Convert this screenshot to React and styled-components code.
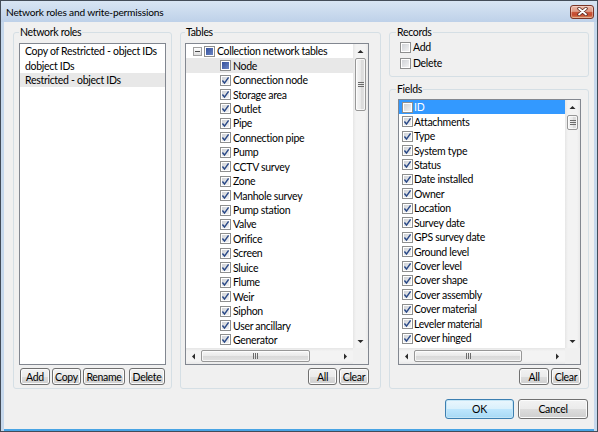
import React from "react";
import styled, { createGlobalStyle } from "styled-components";

const FONT = `"Lato", "Liberation Sans", sans-serif`;

const Global = createGlobalStyle`
  html, body { margin: 0; padding: 0; background: #ffffff; }
  body { font-family: ${FONT}; font-size: 10.5px; letter-spacing: -0.3px; color: #000; }
  *, *::before, *::after { box-sizing: border-box; }
`;

const Window = styled.div`
  width: 598px;
  height: 432px;
  border: 1px solid #434c58;
  background: #c6d8ec;
  display: flex;
  flex-direction: column;
  overflow: hidden;
`;

const TitleBar = styled.div`
  height: 21px;
  flex: none;
  display: flex;
  align-items: center;
  justify-content: space-between;
  padding: 0 3px 0 5px;
  background: linear-gradient(#d8e5f3, #bed1e9);
`;

const Title = styled.span`
  font-size: 10.2px;
  letter-spacing: -0.2px;
  color: #000;
`;

const CloseButton = styled.div`
  width: 24px;
  height: 14px;
  border-radius: 3px;
  border: 1px solid #7a3527;
  background: linear-gradient(#ecb6a5 0%, #de9c88 45%, #c9583c 52%, #c44a2f 75%, #dc905f 100%);
  box-shadow: inset 0 0 0 1px rgba(255, 255, 255, 0.35);
  display: flex;
  align-items: center;
  justify-content: center;
`;

const Body = styled.div`
  flex: 1;
  min-height: 0;
  margin: 0 3px;
  background: #f0f0f0;
  border-bottom: 2px solid #48a4e4;
  display: flex;
  flex-direction: column;
  padding: 4px 5px 10px 9px;
`;

const Columns = styled.div`
  height: 363px;
  flex: none;
  display: flex;
  gap: 8px;
`;

const Column = styled.div`
  width: ${(p) => p.$w}px;
  min-height: 0;
  display: flex;
  flex-direction: column;
  gap: 6px;
`;

const Group = styled.fieldset`
  margin: 0;
  min-width: 0;
  min-height: 0;
  border: 1px solid #d5dfe5;
  border-radius: 3px;
  padding: 0 ${(p) => p.$pr}px ${(p) => p.$pb}px ${(p) => p.$pl}px;
  display: flex;
  flex-direction: column;
  width: ${(p) => (p.$w ? `${p.$w}px` : "auto")};
  flex: ${(p) => (p.$grow ? "1 1 0" : "none")};
  overflow: hidden;
`;

const Legend = styled.legend`
  padding: 0 1px;
  line-height: 13px;
  font-size: 10.5px;
`;

const ListBox = styled.div`
  flex: 1 1 0;
  min-height: 0;
  margin-top: 4px;
  border: 1px solid #828790;
  background: #fff;
  overflow: hidden;
`;

const RoleRow = styled.div`
  height: 14.45px;
  display: flex;
  align-items: center;
  padding-left: 5px;
  white-space: nowrap;
  background: ${(p) => (p.$selected ? "#e8e8e8" : "transparent")};
`;

const ScrollBox = styled.div`
  flex: 1 1 0;
  min-height: 0;
  margin-top: ${(p) => p.$mt}px;
  margin-left: ${(p) => p.$ml || 0}px;
  border: 1px solid #828790;
  background: #fff;
  display: grid;
  grid-template-columns: minmax(0, 1fr) 15px;
  grid-template-rows: minmax(0, 1fr) 16px;
  overflow: hidden;
`;

const Content = styled.div`
  overflow: hidden;
  min-height: 0;
  min-width: 0;
`;

const VScroll = styled.div`
  display: flex;
  flex-direction: column;
  min-height: 0;
  background: linear-gradient(90deg, #e6e6e6, #f3f3f3 20%, #f3f3f3 80%, #e9e9e9);
`;

const HScroll = styled.div`
  display: flex;
  min-width: 0;
  background: linear-gradient(#e6e6e6, #f3f3f3 20%, #f3f3f3 80%, #e9e9e9);
`;

const Corner = styled.div`
  background: #f0f0f0;
`;

const ArrowButton = styled.div`
  flex: none;
  width: ${(p) => (p.$h ? "15px" : "auto")};
  height: ${(p) => (p.$h ? "auto" : "14px")};
  display: flex;
  align-items: center;
  justify-content: center;
`;

const Track = styled.div`
  flex: 1;
  display: flex;
  flex-direction: ${(p) => (p.$h ? "row" : "column")};
  min-width: 0;
  min-height: 0;
`;

const VThumb = styled.div`
  flex: none;
  margin: ${(p) => p.$offset}px 2px 0 2px;
  height: ${(p) => p.$size}px;
  border: 1px solid #979797;
  border-radius: 2px;
  background: linear-gradient(90deg, #f6f6f6, #e9e9e9 50%, #d9d9d9 51%, #e2e2e2);
  box-shadow: inset 0 0 0 1px rgba(255, 255, 255, 0.7);
  display: flex;
  align-items: center;
  justify-content: center;
`;

const HThumb = styled.div`
  flex: none;
  margin: 2px 0 2px ${(p) => p.$offset}px;
  width: ${(p) => p.$size}px;
  border: 1px solid #979797;
  border-radius: 2px;
  background: linear-gradient(#f6f6f6, #e9e9e9 50%, #d9d9d9 51%, #e2e2e2);
  box-shadow: inset 0 0 0 1px rgba(255, 255, 255, 0.7);
  display: flex;
  align-items: center;
  justify-content: center;
`;

const TreeRow = styled.div`
  height: 14.45px;
  display: flex;
  align-items: center;
  white-space: nowrap;
  padding-left: ${(p) => p.$indent}px;
  background: ${(p) => (p.$selected ? "#e8e8e8" : "transparent")};
`;

const ItemRow = styled.div`
  height: 14.45px;
  display: flex;
  align-items: center;
  white-space: nowrap;
  padding-left: 3px;
  background: ${(p) => (p.$selected ? "#3399ff" : "transparent")};
  color: ${(p) => (p.$selected ? "#fff" : "#000")};
`;

const Label = styled.span`
  margin-left: ${(p) => p.$gap ?? 2}px;
`;

const Expander = styled.span`
  flex: none;
  width: 9px;
  height: 9px;
  margin-right: 2px;
  border: 1px solid #a0a0a0;
  background: linear-gradient(#ffffff, #dedede);
  display: flex;
  align-items: center;
  justify-content: center;
  &::after {
    content: "";
    width: 5px;
    height: 1px;
    background: #4a4a4a;
  }
`;

const Box = styled.span`
  flex: none;
  width: 11px;
  height: 11px;
  border: 1px solid #8e8f8f;
  background: linear-gradient(135deg, #cbced3, #f6f6f6);
  box-shadow: inset 0 0 0 1px #ffffff;
  display: flex;
  align-items: center;
  justify-content: center;
`;

const Mixed = styled.span`
  width: 7px;
  height: 7px;
  background: linear-gradient(135deg, #34509b, #6b85c4);
`;

const CheckRow = styled.div`
  height: 16px;
  display: flex;
  align-items: center;
  padding-left: 4px;
`;

const ButtonRow = styled.div`
  flex: none;
  display: flex;
  gap: 2px;
  margin-top: 3px;
  padding-left: ${(p) => p.$pl || 0}px;
  justify-content: ${(p) => (p.$end ? "flex-end" : "flex-start")};
`;

const Button = styled.button`
  font: inherit;
  font-size: 10.5px;
  letter-spacing: -0.3px;
  color: #000;
  padding: 0;
  width: ${(p) => p.$w}px;
  height: ${(p) => p.$h || 17}px;
  margin-left: ${(p) => p.$ml || 0}px;
  border-radius: 3px;
  border: 1px solid ${(p) => (p.$primary ? "#3c7fb1" : "#707070")};
  background: ${(p) =>
    p.$primary
      ? "linear-gradient(#eaf6fd 0%, #d9f0fc 50%, #bee6fd 51%, #a7d9f5 100%)"
      : "linear-gradient(#f2f2f2 0%, #ebebeb 50%, #dddddd 51%, #cfcfcf 100%)"};
  box-shadow: inset 0 0 0 1px ${(p) => (p.$primary ? "#c4e5f6" : "#fcfcfc")};
  display: flex;
  align-items: center;
  justify-content: center;
`;

const Footer = styled.div`
  display: flex;
  justify-content: flex-end;
  gap: 4px;
  margin-top: 10px;
  padding-right: 1px;
`;

function Check({ state }) {
  return (
    <Box>
      {state === "checked" && (
        <svg width="9" height="9" viewBox="0 0 9 9">
          <path d="M1.4 4.6 L3.5 7.1 L7.6 1.4" fill="none" stroke="#2b4a88" strokeWidth="1.5" />
        </svg>
      )}
      {state === "mixed" && <Mixed />}
    </Box>
  );
}

function Arrow({ dir }) {
  const pts = {
    up: "0,4 3,1 6,4",
    down: "0,1 3,4 6,1",
    left: "4,0 1,3 4,6",
    right: "1,0 4,3 1,6",
  }[dir];
  const vertical = dir === "up" || dir === "down";
  return (
    <svg width={vertical ? 7 : 5} height={vertical ? 5 : 7} viewBox={vertical ? "0 0 6 5" : "0 0 5 6"}>
      <polygon points={pts} fill="#2a2a2a" />
    </svg>
  );
}

function GripV() {
  return (
    <svg width="6" height="5" viewBox="0 0 6 5">
      <path d="M0 0.5H6M0 2.5H6M0 4.5H6" stroke="#6b6b6b" strokeWidth="1" />
    </svg>
  );
}

function GripH() {
  return (
    <svg width="5" height="6" viewBox="0 0 5 6">
      <path d="M0.5 0V6M2.5 0V6M4.5 0V6" stroke="#6b6b6b" strokeWidth="1" />
    </svg>
  );
}

function Scroller({ children, mt, ml, vOffset, vSize, hSize }) {
  return (
    <ScrollBox $mt={mt} $ml={ml}>
      <Content>{children}</Content>
      <VScroll>
        <ArrowButton>
          <Arrow dir="up" />
        </ArrowButton>
        <Track>
          <VThumb $offset={vOffset} $size={vSize}>
            <GripV />
          </VThumb>
        </Track>
        <ArrowButton>
          <Arrow dir="down" />
        </ArrowButton>
      </VScroll>
      <HScroll>
        <ArrowButton $h>
          <Arrow dir="left" />
        </ArrowButton>
        <Track $h>
          <HThumb $offset={0} $size={hSize}>
            <GripH />
          </HThumb>
        </Track>
        <ArrowButton $h>
          <Arrow dir="right" />
        </ArrowButton>
      </HScroll>
      <Corner />
    </ScrollBox>
  );
}

const roles = [
  { name: "Copy of Restricted - object IDs" },
  { name: "dobject IDs" },
  { name: "Restricted - object IDs", selected: true },
];

const tables = [
  "Node",
  "Connection node",
  "Storage area",
  "Outlet",
  "Pipe",
  "Connection pipe",
  "Pump",
  "CCTV survey",
  "Zone",
  "Manhole survey",
  "Pump station",
  "Valve",
  "Orifice",
  "Screen",
  "Sluice",
  "Flume",
  "Weir",
  "Siphon",
  "User ancillary",
  "Generator",
];

const fields = [
  "ID",
  "Attachments",
  "Type",
  "System type",
  "Status",
  "Date installed",
  "Owner",
  "Location",
  "Survey date",
  "GPS survey date",
  "Ground level",
  "Cover level",
  "Cover shape",
  "Cover assembly",
  "Cover material",
  "Leveler material",
  "Cover hinged",
];

export default function App() {
  return (
    <>
      <Global />
      <Window>
        <TitleBar>
          <Title>Network roles and write-permissions</Title>
          <CloseButton>
            <svg width="11" height="9" viewBox="0 0 11 9">
              <path d="M2 1.5 L9 7.5 M9 1.5 L2 7.5" stroke="#5a2a20" strokeWidth="3.4" strokeLinecap="round" />
              <path d="M2 1.5 L9 7.5 M9 1.5 L2 7.5" stroke="#ffffff" strokeWidth="1.8" strokeLinecap="round" />
            </svg>
          </CloseButton>
        </TitleBar>
        <Body>
          <Columns>
            <Group $w={159} $pl={5} $pr={5} $pb={3}>
              <Legend>Network roles</Legend>
              <ListBox>
                {roles.map((r) => (
                  <RoleRow key={r.name} $selected={r.selected}>
                    {r.name}
                  </RoleRow>
                ))}
              </ListBox>
              <ButtonRow $pl={1}>
                <Button $w={30}>Add</Button>
                <Button $w={29}>Copy</Button>
                <Button $w={42}>Rename</Button>
                <Button $w={36} $ml={2}>
                  Delete
                </Button>
              </ButtonRow>
            </Group>

            <Group $w={201} $pl={4} $pr={11} $pb={3}>
              <Legend>Tables</Legend>
              <Scroller mt={4} vOffset={0} vSize={53} hSize={109}>
                <TreeRow $indent={7}>
                  <Expander />
                  <Check state="mixed" />
                  <Label>Collection network tables</Label>
                </TreeRow>
                {tables.map((t, i) => (
                  <TreeRow key={t} $indent={34} $selected={i === 0}>
                    <Check state={i === 0 ? "mixed" : "checked"} />
                    <Label>{t}</Label>
                  </TreeRow>
                ))}
              </Scroller>
              <ButtonRow $end>
                <Button $w={29}>All</Button>
                <Button $w={30}>Clear</Button>
              </ButtonRow>
            </Group>

            <Column $w={200}>
              <Group $pl={6} $pr={6} $pb={5}>
                <Legend>Records</Legend>
                <CheckRow>
                  <Check state="unchecked" />
                  <Label>Add</Label>
                </CheckRow>
                <CheckRow>
                  <Check state="unchecked" />
                  <Label>Delete</Label>
                </CheckRow>
              </Group>
              <Group $grow $pl={6} $pr={7} $pb={3}>
                <Legend>Fields</Legend>
                <Scroller mt={3} ml={2} vOffset={1} vSize={15} hSize={108}>
                  {fields.map((f, i) => (
                    <ItemRow key={f} $selected={i === 0}>
                      <Check state={i === 0 ? "unchecked" : "checked"} />
                      <Label $gap={1}>{f}</Label>
                    </ItemRow>
                  ))}
                </Scroller>
                <ButtonRow $end>
                  <Button $w={30}>All</Button>
                  <Button $w={30}>Clear</Button>
                </ButtonRow>
              </Group>
            </Column>
          </Columns>
          <Footer>
            <Button $primary $w={69} $h={20}>
              OK
            </Button>
            <Button $w={70} $h={20}>
              Cancel
            </Button>
          </Footer>
        </Body>
      </Window>
    </>
  );
}
